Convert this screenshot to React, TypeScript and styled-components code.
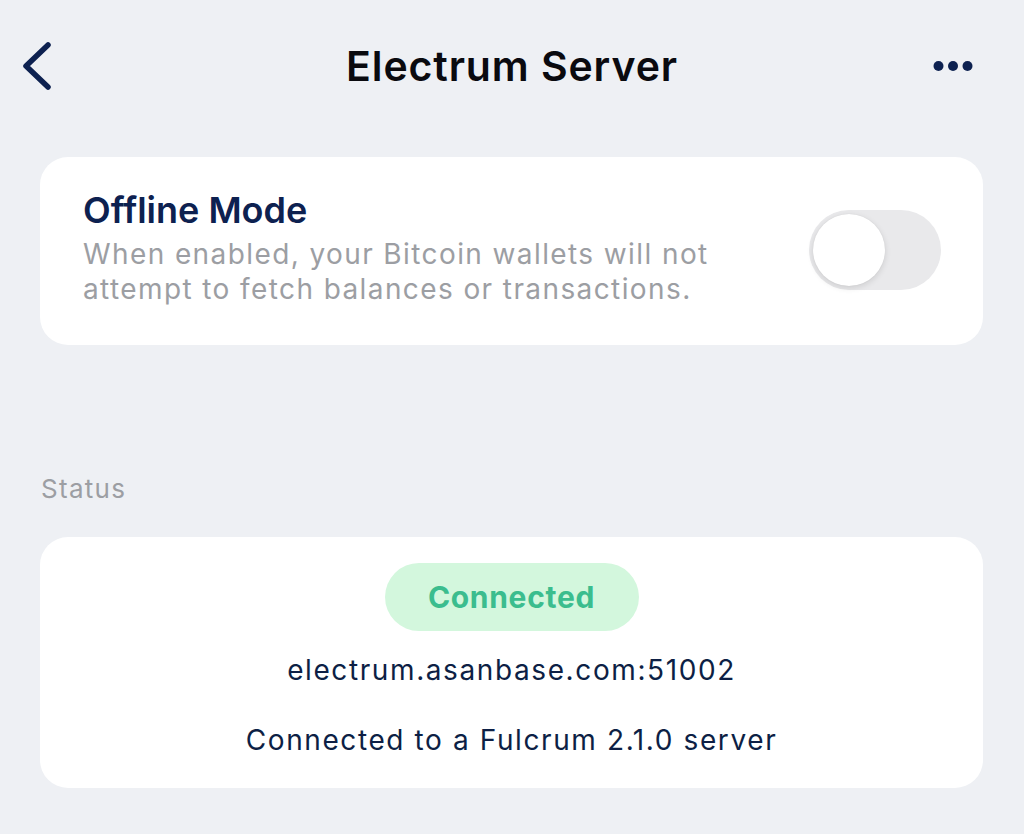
import React from "react";
import styled, { createGlobalStyle } from "styled-components";

const Global = createGlobalStyle`
  html, body { margin: 0; padding: 0; background: #eef0f4; }
  body { font-family: Inter, "Noto Sans", sans-serif; -webkit-font-smoothing: antialiased; }
`;

const Page = styled.div`
  width: 1024px;
  height: 834px;
  background: #eef0f4;
  box-sizing: border-box;
  padding: 0 41px 0 40px;
  display: flex;
  flex-direction: column;
  overflow: hidden;
`;

const Header = styled.div`
  height: 132px;
  margin: 0 -41px 25px -40px;
  padding: 0 16px;
  display: grid;
  grid-template-columns: 1fr auto 1fr;
  align-items: center;
  box-sizing: border-box;
`;

const IconButton = styled.button<{ $end?: boolean }>`
  border: none;
  background: none;
  padding: 0;
  display: flex;
  align-items: center;
  justify-content: center;
  justify-self: ${(p) => (p.$end ? "end" : "start")};
  margin-right: ${(p) => (p.$end ? "31px" : "0")};
  color: #0d2150;
`;

const Title = styled.h1`
  margin: 0;
  font-size: 41px;
  font-weight: 600;
  color: #0a0a0f;
  letter-spacing: 0.9px;
  line-height: 50px;
`;

const Card = styled.div`
  background: #ffffff;
  border-radius: 28px;
`;

const ToggleRow = styled.div`
  display: flex;
  align-items: flex-start;
  justify-content: space-between;
  height: 188px;
  padding: 33px 42px 0 43px;
  box-sizing: border-box;
`;

const TextCol = styled.div`
  display: flex;
  flex-direction: column;
`;

const RowTitle = styled.div`
  font-size: 36px;
  font-weight: 600;
  color: #0d2150;
  line-height: 40px;
  margin-bottom: 7px;
`;

const RowDesc = styled.div`
  font-size: 28px;
  color: #9c9ea3;
  line-height: 35px;
  letter-spacing: 1.4px;
`;

const Switch = styled.div`
  width: 132px;
  height: 80px;
  border-radius: 40px;
  background: #e9e9eb;
  position: relative;
  flex-shrink: 0;
  margin-top: 20px;
`;

const Knob = styled.div`
  position: absolute;
  left: 4px;
  top: 4px;
  width: 72px;
  height: 72px;
  border-radius: 50%;
  background: #ffffff;
  box-shadow: 0 2px 6px rgba(0, 0, 0, 0.12), 0 0 1px rgba(0, 0, 0, 0.1);
`;

const SectionLabel = styled.div`
  font-size: 26px;
  color: #9c9ea3;
  margin: 129px 0 33px 1px;
  line-height: 30px;
  letter-spacing: 1.3px;
`;

const StatusCard = styled.div`
  background: #ffffff;
  border-radius: 28px;
  height: 251px;
  display: flex;
  flex-direction: column;
  align-items: center;
  padding-top: 26px;
  box-sizing: border-box;
`;

const Pill = styled.div`
  width: 254px;
  height: 68px;
  border-radius: 34px;
  background: #d3f7dd;
  color: #3bbd8e;
  font-size: 30px;
  font-weight: 700;
  display: flex;
  align-items: center;
  justify-content: center;
  letter-spacing: 0.7px;
`;

const InfoLine = styled.div<{ $mt: number }>`
  font-size: 28px;
  color: #0d1f45;
  margin-top: ${(p) => p.$mt}px;
  line-height: 34px;
  letter-spacing: 1.6px;
`;

export default function App() {
  return (
    <>
      <Global />
      <Page>
        <Header>
          <IconButton aria-label="Back">
            <svg width="48" height="56" viewBox="0 0 48 56" fill="none">
              <path d="M32 7 L10 28 L32 49" stroke="#0d2150" strokeWidth="5.5" strokeLinecap="round" strokeLinejoin="round" />
            </svg>
          </IconButton>
          <Title>Electrum Server</Title>
          <IconButton $end aria-label="More">
            <svg width="48" height="14" viewBox="0 0 48 14">
              <circle cx="9.5" cy="7" r="5" fill="#0d2150" />
              <circle cx="24" cy="7" r="5" fill="#0d2150" />
              <circle cx="38.5" cy="7" r="5" fill="#0d2150" />
            </svg>
          </IconButton>
        </Header>
        <Card>
          <ToggleRow>
            <TextCol>
              <RowTitle>Offline Mode</RowTitle>
              <RowDesc>
                When enabled, your Bitcoin wallets will not
                <br />
                attempt to fetch balances or transactions.
              </RowDesc>
            </TextCol>
            <Switch>
              <Knob />
            </Switch>
          </ToggleRow>
        </Card>
        <SectionLabel>Status</SectionLabel>
        <StatusCard>
          <Pill>Connected</Pill>
          <InfoLine $mt={22}>electrum.asanbase.com:51002</InfoLine>
          <InfoLine $mt={36}>Connected to a Fulcrum 2.1.0 server</InfoLine>
        </StatusCard>
      </Page>
    </>
  );
}
